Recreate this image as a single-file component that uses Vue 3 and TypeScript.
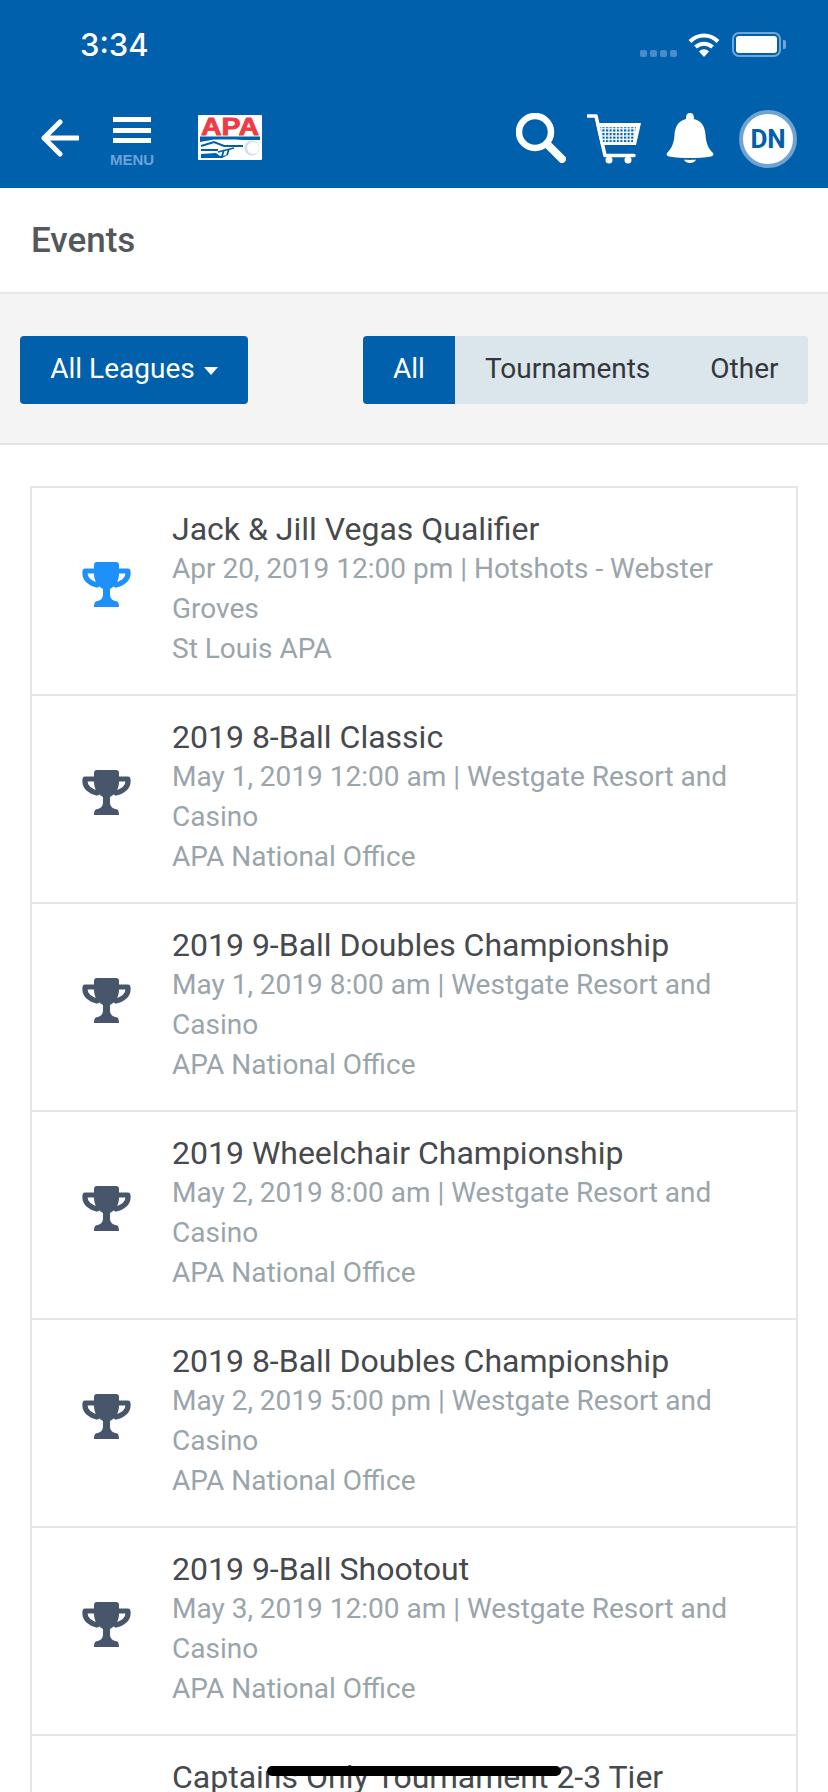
<template>
  <div class="screen">
    <header class="topbar">
      <div class="status">
        <span class="clock">3:34</span>
        <div class="status-right">
          <div class="signal"><i /><i /><i /><i /></div>
          <svg class="wifi" width="32" height="25" viewBox="0 0 32 25">
            <path d="M2 9.500C10 1.500 22 1.500 30 9.500" fill="none" stroke="#fff" stroke-width="4" />
            <path d="M7.500 15C12.500 10.500 19.500 10.500 24.500 15" fill="none" stroke="#fff" stroke-width="4" />
            <path d="M11 19.500C14 16.500 18 16.500 21 19.500L16 25Z" fill="#fff" />
          </svg>
          <div class="battery"><div class="battery-fill" /></div>
          <div class="battery-tip" />
        </div>
      </div>
      <nav class="nav">
        <svg class="back" width="38" height="38" viewBox="0 0 38 38">
          <path d="M19 3L3 19L19 35M3 19H37" fill="none" stroke="#fff" stroke-width="5" stroke-linecap="round" stroke-linejoin="round" />
        </svg>
        <div class="menu">
          <div class="menu-bars"><i /><i /><i /></div>
          <span class="menu-label">MENU</span>
        </div>
        <svg class="logo" width="64" height="45" viewBox="0 0 64 45">
          <rect width="64" height="45" rx="1" fill="#fff" />
          <text x="3" y="20" textLength="58" lengthAdjust="spacingAndGlyphs" class="logo-text">APA</text>
          <path d="M2 21.500H62V25H44L38 24.500H16L2 27Z" fill="#0060ac" />
          <path d="M3 31L16 27L26 31H45M3 35H20" fill="none" stroke="#0060ac" stroke-width="2" />
          <path d="M3 43V39L18 38L22 41L30 40L24 43Z" fill="#0060ac" />
          <path d="M20 37L36 33M26 35L24 41M31 34L29 40" fill="none" stroke="#0060ac" stroke-width="1.800" />
          <circle cx="54" cy="33" r="7.500" fill="#0060ac" opacity="0.2" />
          <circle cx="55" cy="33" r="6" fill="#fff" />
        </svg>
        <div class="nav-right">
          <svg class="ico-search" width="50" height="50" viewBox="0 0 50 50">
            <circle cx="19" cy="19" r="16" fill="none" stroke="#fff" stroke-width="6.500" />
            <path d="M32 32L46 46" stroke="#fff" stroke-width="8" stroke-linecap="round" />
          </svg>
          <svg class="ico-cart" width="54" height="50" viewBox="0 0 54 50">
            <defs>
              <pattern id="cartdots" width="3.600" height="3.600" patternUnits="userSpaceOnUse" x="1" y="1">
                <rect width="2.200" height="2.200" fill="#0060ac" />
              </pattern>
            </defs>
            <path d="M1 2H9L18 41.500H47" fill="none" stroke="#fff" stroke-width="3.500" stroke-linecap="round" stroke-linejoin="round" />
            <path d="M9 9H54L49 31H14Z" fill="#fff" />
            <path d="M13 13H49L46 28H16Z" fill="url(#cartdots)" />
            <circle cx="22" cy="46" r="3.500" fill="#fff" />
            <circle cx="41" cy="46" r="3.500" fill="#fff" />
          </svg>
          <svg class="ico-bell" width="48" height="51" viewBox="0 0 48 51">
            <path d="M20 6C20 2 21 0 24 0S28 2 28 6C36 8 39 14 39.500 22C40 31 43 36 47 40C48 42 47 43 45 43.500C32 45.500 16 45.500 3 43.500C1 43 0 42 1 40C5 36 8 31 8.500 22C9 14 12 8 20 6Z" fill="#fff" />
            <path d="M18 46.500C21 47 27 47 30 46.500C29 51 19 51 18 46.500Z" fill="#fff" />
          </svg>
          <div class="avatar">DN</div>
        </div>
      </nav>
    </header>

    <div class="page-title">Events</div>

    <div class="filters">
      <button class="league-btn">All Leagues<span class="caret" /></button>
      <div class="tabs">
        <span
          v-for="tab in tabs"
          :key="tab"
          class="tab"
          :class="{ active: tab === activeTab }"
        >{{ tab }}</span>
      </div>
    </div>

    <div class="list">
      <div v-for="(ev, i) in events" :key="ev.title" class="row">
        <div class="row-icon">
          <svg width="49" height="45" viewBox="0 0 49 45" :class="i === 0 ? 'trophy-on' : 'trophy'">
            <path d="M12 9H3C2 17 8 21 15 23M37 9H46C47 17 41 21 34 23" fill="none" stroke="currentColor" stroke-width="5" stroke-linejoin="round" stroke-linecap="round" />
            <path d="M12 3A3 3 0 0 1 15 0H34A3 3 0 0 1 37 3V12C37 20 32 25 28 27V32C28 36 30 38 33 39C36 39 37 41 37 45H12C12 41 13 39 16 39C19 38 21 36 21 32V27C17 25 12 20 12 12Z" fill="currentColor" />
          </svg>
        </div>
        <div class="row-text">
          <div class="row-title">{{ ev.title }}</div>
          <div class="row-sub">{{ ev.when }}</div>
          <div class="row-sub">{{ ev.org }}</div>
        </div>
      </div>
    </div>

    <div class="home-bar" />
  </div>
</template>

<script setup lang="ts">
interface EventRow {
  title: string
  when: string
  org: string
}

const tabs: string[] = ['All', 'Tournaments', 'Other']
const activeTab = 'All'

const events: EventRow[] = [
  { title: 'Jack & Jill Vegas Qualifier', when: 'Apr 20, 2019 12:00 pm | Hotshots - Webster Groves', org: 'St Louis APA' },
  { title: '2019 8-Ball Classic', when: 'May 1, 2019 12:00 am | Westgate Resort and Casino', org: 'APA National Office' },
  { title: '2019 9-Ball Doubles Championship', when: 'May 1, 2019 8:00 am | Westgate Resort and Casino', org: 'APA National Office' },
  { title: '2019 Wheelchair Championship', when: 'May 2, 2019 8:00 am | Westgate Resort and Casino', org: 'APA National Office' },
  { title: '2019 8-Ball Doubles Championship', when: 'May 2, 2019 5:00 pm | Westgate Resort and Casino', org: 'APA National Office' },
  { title: '2019 9-Ball Shootout', when: 'May 3, 2019 12:00 am | Westgate Resort and Casino', org: 'APA National Office' },
  { title: 'Captains Only Tournament 2-3 Tier', when: 'May 3, 2019 1:00 pm | Westgate Resort and Casino', org: 'APA National Office' }
]
</script>

<style>
html, body {
  margin: 0;
  background: #fff;
}
</style>

<style scoped>
.screen {
  position: relative;
  width: 828px;
  height: 1792px;
  overflow: hidden;
  background: #fff;
  font-family: Roboto, 'Liberation Sans', sans-serif;
}

/* top blue bar */
.topbar {
  height: 188px;
  background: #0060ac;
  color: #fff;
}
.status {
  height: 90px;
  display: flex;
  justify-content: space-between;
  align-items: flex-start;
  padding: 0 42px 0 80px;
}
.clock {
  margin-top: 26px;
  font-family: Inter, Roboto, sans-serif;
  font-size: 31px;
  line-height: 38px;
  font-weight: 500;
}
.status-right {
  display: flex;
  align-items: flex-start;
  padding-top: 32px;
}
.signal {
  display: flex;
  gap: 3px;
  margin-top: 18px;
  margin-right: 11px;
}
.signal i {
  width: 7px;
  height: 7px;
  border-radius: 2px;
  background: #4a8cc8;
}
.wifi {
  margin-right: 12px;
}
.battery {
  width: 49px;
  height: 25px;
  box-sizing: border-box;
  border: 2px solid #6fa6d8;
  border-radius: 7px;
  padding: 2px;
}
.battery-fill {
  height: 100%;
  background: #fff;
  border-radius: 3px;
}
.battery-tip {
  width: 3px;
  height: 9px;
  margin: 8px 0 0 2px;
  background: #6fa6d8;
  border-radius: 0 2px 2px 0;
}
.nav {
  height: 98px;
  display: flex;
  align-items: flex-start;
  padding: 20px 31px 0 41px;
}
.back {
  margin-top: 9px;
}
.menu {
  width: 44px;
  margin-left: 31px;
  margin-top: 7px;
}
.menu-bars {
  display: flex;
  flex-direction: column;
  gap: 5.500px;
  align-items: center;
}
.menu-bars i {
  width: 38px;
  height: 5px;
  background: #fff;
}
.menu-label {
  display: block;
  margin-top: 9px;
  text-align: center;
  font-family: 'Liberation Sans', Roboto, sans-serif;
  font-size: 15px;
  line-height: 16px;
  font-weight: 700;
  color: #6ca3d6;
}
.logo {
  margin-left: 44px;
  margin-top: 5px;
}
.logo-text {
  font-family: 'Liberation Sans', sans-serif;
  font-size: 24px;
  font-weight: 700;
  fill: #ee3b44;
  stroke: #ee3b44;
  stroke-width: 0.8px;
}
.nav-right {
  margin-left: auto;
  display: flex;
  align-items: flex-start;
}
.ico-search {
  margin-top: 3px;
}
.ico-cart {
  margin-top: 4px;
  margin-left: 21px;
}
.ico-bell {
  margin-top: 3px;
  margin-left: 25px;
}
.avatar {
  width: 58px;
  height: 58px;
  box-sizing: border-box;
  margin-left: 25px;
  border-radius: 50%;
  border: 4px solid #6fa3d2;
  background: #fff;
  color: #0060ac;
  font-size: 26px;
  font-weight: 700;
  line-height: 50px;
  text-align: center;
}

/* title strip */
.page-title {
  height: 106px;
  box-sizing: border-box;
  padding-left: 31px;
  border-bottom: 2px solid #e6e6e6;
  color: #54585c;
  font-size: 35px;
  font-weight: 500;
  line-height: 105px;
}

/* filter strip */
.filters {
  height: 151px;
  box-sizing: border-box;
  display: flex;
  justify-content: space-between;
  align-items: flex-start;
  padding: 42px 20px 0;
  background: #f4f4f4;
  border-bottom: 2px solid #e3e3e3;
}
.league-btn {
  width: 228px;
  height: 68px;
  padding: 0 0 3px;
  border: 0;
  border-radius: 4px;
  background: #0060ac;
  color: #fff;
  font-family: inherit;
  font-size: 28px;
}
.caret {
  display: inline-block;
  margin-left: 9px;
  vertical-align: 3px;
  border-left: 7.500px solid transparent;
  border-right: 7.500px solid transparent;
  border-top: 8px solid #fff;
}
.tabs {
  display: flex;
  height: 68px;
  width: 445px;
  border-radius: 4px;
  overflow: hidden;
  background: #dbe5ec;
}
.tab {
  padding: 0 30px;
  color: #33373b;
  font-size: 28px;
  line-height: 66px;
}
.tab.active {
  background: #0060ac;
  color: #fff;
}

/* event rows */
.list {
  margin: 41px 30px 0 30px;
  border: 2px solid #e6e6e6;
  border-bottom: 0;
}
.row {
  height: 208px;
  box-sizing: border-box;
  display: flex;
  border-bottom: 2px solid #e6e6e6;
  padding-top: 21px;
}
.row-icon {
  width: 140px;
  padding: 53px 0 0 50px;
  box-sizing: border-box;
  flex-shrink: 0;
}
.trophy {
  color: #47566b;
}
.trophy-on {
  color: #1e90fa;
}
.row-text {
  flex: 1;
  min-width: 0;
  padding-right: 40px;
}
.row-title {
  color: #46494d;
  font-size: 32px;
  line-height: 40px;
}
.row-sub {
  color: #9aa5ab;
  font-size: 28px;
  line-height: 40px;
}

.home-bar {
  position: absolute;
  left: 267px;
  top: 1766px;
  width: 294px;
  height: 10px;
  border-radius: 5px;
  background: #000;
}
</style>
